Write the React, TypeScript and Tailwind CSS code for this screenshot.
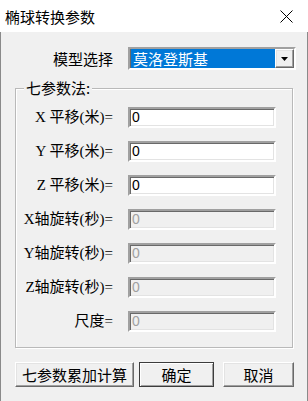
const sunken =
  "border-2 border-t-[#a0a0a0] border-l-[#a0a0a0] border-b-white border-r-white shadow-[inset_1px_1px_0_#696969,inset_-1px_-1px_0_#e3e3e3]";

const raised =
  "border border-t-white border-l-white border-b-[#696969] border-r-[#696969] shadow-[inset_-1px_-1px_0_#a0a0a0,inset_1px_1px_0_#e3e3e3]";

const fields = [
  { label: "X 平移(米)=", enabled: true },
  { label: "Y 平移(米)=", enabled: true },
  { label: "Z 平移(米)=", enabled: true },
  { label: "X轴旋转(秒)=", enabled: false },
  { label: "Y轴旋转(秒)=", enabled: false },
  { label: "Z轴旋转(秒)=", enabled: false },
  { label: "尺度=", enabled: false },
];

export default function App() {
  return (
    <div className="w-[308px] h-[401px] flex flex-col bg-[#f0f0f0] text-black font-['Noto_Sans_CJK_SC',sans-serif] overflow-hidden">
      {/* title bar */}
      <div className="h-[32px] bg-white flex items-center justify-between pl-[5px] pr-[15px] shrink-0">
        <span className="text-[15px] leading-none">椭球转换参数</span>
        <svg width="13" height="13" viewBox="0 0 13 13">
          <path d="M0.5 0.5 L12.5 12.5 M12.5 0.5 L0.5 12.5" stroke="#000" strokeWidth="1" />
        </svg>
      </div>

      <div className="flex-1 border-l border-r border-[#8a8a8a] pt-[15px]">
        {/* model select */}
        <div className="flex items-center h-[23px]">
          <div className="w-[112px] text-right text-[15px] leading-none">模型选择</div>
          <div className={`ml-[15px] w-[168px] h-[23px] flex items-center bg-white ${sunken}`}>
            <div className="flex-1 h-[19px] ml-[1px] bg-[#0078d7] text-white text-[15px] leading-[19px] pl-[2px]">
              莫洛登斯基
            </div>
            <div className={`w-[19px] h-[19px] bg-[#f0f0f0] flex items-center justify-center ${raised}`}>
              <svg width="7" height="4" viewBox="0 0 7 4">
                <path d="M0 0 H7 L3.5 4 Z" fill="#000" />
              </svg>
            </div>
          </div>
        </div>

        {/* seven parameter group */}
        <div className="relative mt-[18px] ml-[14px] w-[278px] border border-[#b9b9b9] shadow-[inset_1px_1px_0_#fff,1px_1px_0_#fff] pt-[18px] pb-[15px]">
          <span className="absolute left-[8px] top-[-10px] px-[2px] bg-[#f0f0f0] text-[15px] leading-[18px]">
            七参数法:
          </span>
          <div className="flex flex-col gap-[13px]">
            {fields.map((f) => (
              <div key={f.label} className="flex items-center h-[21px]">
                <div className="w-[97px] text-right text-[15px] leading-none font-['Liberation_Serif','Noto_Sans_CJK_SC',serif] whitespace-nowrap">
                  {f.label}
                </div>
                <div
                  className={`ml-[15px] w-[148px] h-[21px] pl-[2px] flex items-center text-[14px] font-['Liberation_Sans',sans-serif] ${sunken} ${
                    f.enabled ? "bg-white text-black" : "bg-[#f0f0f0] text-[#a0a0a0]"
                  }`}
                >
                  0
                </div>
              </div>
            ))}
          </div>
        </div>

        {/* buttons */}
        <div className="flex mt-[14px] ml-[14px] text-[15px] leading-none">
          <button className={`w-[119px] h-[25px] bg-[#f0f0f0] ${raised}`}>七参数累加计算</button>
          <button className="ml-[5px] w-[75px] h-[25px] bg-[#f0f0f0] border border-[#3c3c3c] shadow-[inset_1px_1px_0_#fff,inset_-1px_-1px_0_#a0a0a0]">
            确定
          </button>
          <button className={`ml-[9px] w-[71px] h-[25px] bg-[#f0f0f0] ${raised}`}>取消</button>
        </div>
      </div>
    </div>
  );
}
